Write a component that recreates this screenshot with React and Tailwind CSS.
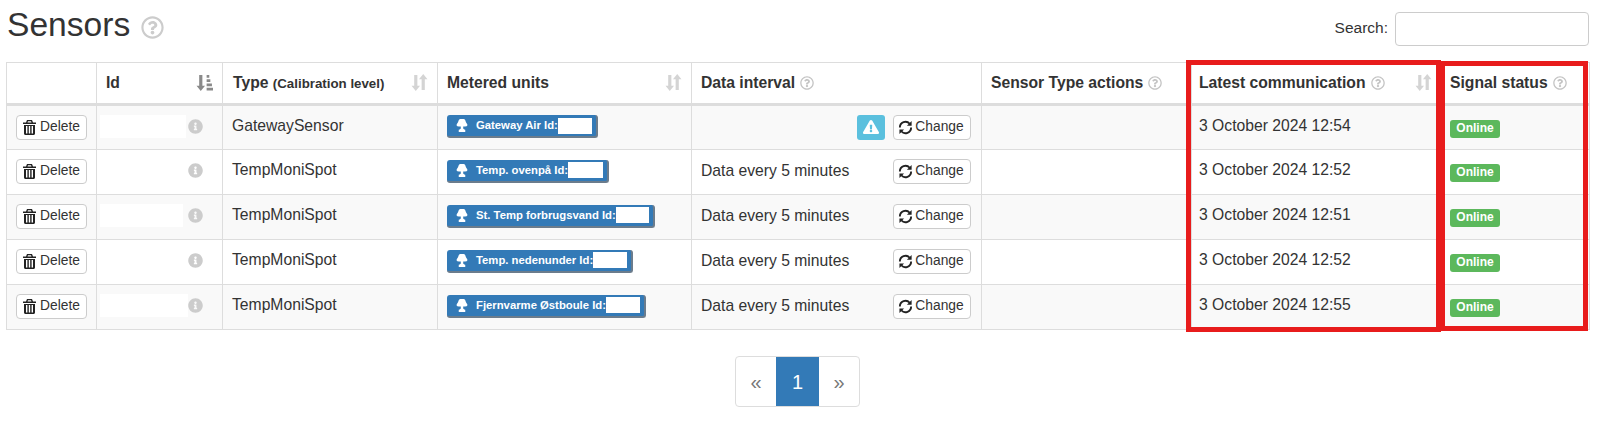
import { FaInfoCircle, FaRegQuestionCircle, FaExclamationTriangle } from 'react-icons/fa';

const rows = [
  { type: 'GatewaySensor', unit: 'Gateway Air Id:', unitClass: 'w-[151px]', boxClass: 'w-[37px]', idBox: 'w-[86px]', time: '3 October 2024 12:54', warn: true },
  { type: 'TempMoniSpot', unit: 'Temp. ovenpå Id:', unitClass: 'w-[162px]', boxClass: 'w-[40px]', idBox: 'w-[86px]', time: '3 October 2024 12:52' },
  { type: 'TempMoniSpot', unit: 'St. Temp forbrugsvand Id:', unitClass: 'w-[208px]', boxClass: 'w-[36px]', idBox: 'w-[83px]', time: '3 October 2024 12:51' },
  { type: 'TempMoniSpot', unit: 'Temp. nedenunder Id:', unitClass: 'w-[186px]', boxClass: 'w-[37px]', idBox: 'w-[86px]', time: '3 October 2024 12:52' },
  { type: 'TempMoniSpot', unit: 'Fjernvarme Østboule Id:', unitClass: 'w-[199px]', boxClass: 'w-[41px]', idBox: 'w-[88px]', time: '3 October 2024 12:55' },
];

function SortBoth() {
  return (
    <svg viewBox="0 0 16 16" className="h-[17px] w-[17px] text-[#d4d4d4]" fill="currentColor">
      <path d="M3 1h3v10h2.500L4.500 16 .5 11H3z" />
      <path d="M10 15h3V5h2.500L11.500 0l-4 5H10z" />
    </svg>
  );
}

function SortAsc() {
  return (
    <svg viewBox="0 0 16 16" className="h-[17px] w-[17px] text-[#8a8a8a]" fill="currentColor">
      <path d="M3 1h3v10h2.500L4.500 16 .5 11H3z" />
      <path d="M10 1h2.500v2.500H10zM10 5h3.500v2.500H10zM10 9h5v2.500h-5zM10 13h6v2.500h-6z" />
    </svg>
  );
}

function Lamp() {
  return (
    <svg viewBox="0 0 12 14" className="h-[13px] w-[12px] text-white" fill="currentColor">
      <path d="M3 .5C4 0 8 0 9 .5c.8.8 1 3 2.500 5 .6.9.4 2-.5 2.200-1 .2-2.500.3-3.700.3V10c0 .8.700 1.200 2.200 1.500V14h-7v-2.500C4 11.200 4.700 10.800 4.700 10V8C3.500 8 2 7.900 1 7.700.1 7.500-.1 6.400.5 5.500 2 3.500 2.200 1.300 3 .5z" />
    </svg>
  );
}

function Trash() {
  return (
    <svg viewBox="0 0 13 15" className="h-[15px] w-[13px] text-[#222]" fill="currentColor">
      <path d="M4 0h5l1 2.500h3V4H0V2.500h3zM5 1.200l-.500 1.300h4L8 1.200z" />
      <path d="M1 5h11v8.500c0 .8-.6 1.500-1.500 1.500h-8C1.700 15 1 14.300 1 13.500zM3 6v7.500h1.400V6zm2.800 0v7.500h1.400V6zm2.800 0v7.500H10V6z" />
    </svg>
  );
}

function Refresh() {
  return (
    <svg viewBox="0 0 16 16" className="h-[15px] w-[15px] text-[#222]" fill="none" stroke="currentColor" strokeWidth="2">
      <path d="M2 8a6 6 0 0 1 10.500-4" />
      <path d="M14 8a6 6 0 0 1-10.500 4" />
      <path d="M14.500 1v5h-5z" fill="currentColor" stroke="none" />
      <path d="M1.500 15v-5h5z" fill="currentColor" stroke="none" />
    </svg>
  );
}

function Th({ children, sort, help, className = '' }) {
  return (
    <th className={`h-[42px] border border-[#ddd] border-b-[3px] px-[9px] text-left align-middle text-[15.700px] font-bold text-[#333] ${className}`}>
      <div className="flex items-center justify-between">
        <span className="flex items-center gap-[5px] whitespace-nowrap">
          {children}
          {help && <FaRegQuestionCircle className="text-[14px] text-[#c4c4c4]" />}
        </span>
        {sort}
      </div>
    </th>
  );
}

function Btn({ children, className = '' }) {
  return (
    <button className={`flex h-[25px] items-center justify-center rounded-[4px] border border-[#ccc] bg-white text-[13.800px] text-[#333] ${className}`}>
      {children}
    </button>
  );
}

export default function App() {
  return (
    <div className="relative h-[432px] w-[1615px] overflow-hidden bg-white font-['Liberation_Sans',sans-serif] text-[15.700px] text-[#333]">
      <div className="flex h-[62px] items-start justify-between pl-[7px] pr-[26px]">
        <h1 className="mt-[3px] flex items-center gap-[11px] text-[33.600px] leading-[44px] font-normal">
          Sensors
          <FaRegQuestionCircle className="mt-[5px] text-[23px] text-[#ccc]" />
        </h1>
        <label className="mt-[12px] flex items-center gap-[7px] text-[15.500px]">
          <span className="pb-[2px]">Search:</span>
          <input className="h-[34px] w-[194px] rounded-[4px] border border-[#ccc] bg-white" />
        </label>
      </div>

      <div className="pl-[6px]">
        <table className="w-[1583px] table-fixed border-collapse">
          <colgroup>
            <col className="w-[90px]" />
            <col className="w-[126px]" />
            <col className="w-[215px]" />
            <col className="w-[254px]" />
            <col className="w-[290px]" />
            <col className="w-[210px]" />
            <col className="w-[252px]" />
            <col className="w-[146px]" />
          </colgroup>
          <thead>
            <tr>
              <Th />
              <Th sort={<SortAsc />}>Id</Th>
              <Th className="pl-[10px]" sort={<SortBoth />}>
                <span>Type <span className="text-[13.300px]">(Calibration level)</span></span>
              </Th>
              <Th sort={<SortBoth />}>Metered units</Th>
              <Th help>Data interval</Th>
              <Th help>Sensor Type actions</Th>
              <Th className="pl-[7px] pr-[11px]" help sort={<SortBoth />}>Latest communication</Th>
              <Th className="pl-[6px]" help>Signal status</Th>
            </tr>
          </thead>
          <tbody>
            {rows.map((row, i) => (
              <tr key={i} className={i % 2 === 0 ? 'bg-[#f9f9f9]' : 'bg-white'}>
                <td className="h-[45px] border border-[#ddd] pb-[1px] pl-[9px] align-middle">
                  <Btn className="w-[71px] gap-[4px]">
                    <Trash />
                    Delete
                  </Btn>
                </td>
                <td className="border border-[#ddd] pb-[3px] pl-[3px] align-middle">
                  <div className="flex items-center justify-between pr-[19px]">
                    <div className={`h-[23px] bg-white ${row.idBox}`} />
                    <FaInfoCircle className="text-[15px] text-[#ccc]" />
                  </div>
                </td>
                <td className="border border-[#ddd] px-[9px] pb-[4px] align-middle">{row.type}</td>
                <td className="border border-[#ddd] pb-[2px] pl-[9px] align-middle">
                  <div className={`flex h-[23px] items-center justify-between rounded-[3px] border-r-2 border-b-2 border-[#6b7c8c] bg-[#337ab7] pl-[9px] pr-[4px] text-[11.300px] font-bold text-white ${row.unitClass}`}>
                    <span className="flex items-center gap-[8px] whitespace-nowrap">
                      <Lamp />
                      {row.unit}
                    </span>
                    <span className={`h-[16px] bg-white ${row.boxClass}`} />
                  </div>
                </td>
                <td className="border border-[#ddd] pl-[9px] pr-[10px] pb-[1px] align-middle">
                  <div className="flex items-center justify-between">
                    <span className="pb-[2px]">{row.warn ? '' : 'Data every 5 minutes'}</span>
                    <div className="flex items-center gap-[8px]">
                      {row.warn && (
                        <span className="flex h-[25px] w-[28px] items-center justify-center rounded-[3px] bg-[#5bc0de]">
                          <FaExclamationTriangle className="text-[16px] text-white" />
                        </span>
                      )}
                      <Btn className="w-[78px] gap-[2px] pr-[2px]">
                        <Refresh />
                        Change
                      </Btn>
                    </div>
                  </div>
                </td>
                <td className="border border-[#ddd]" />
                <td className="border border-[#ddd] px-[7px] pb-[4px] align-middle whitespace-nowrap">{row.time}</td>
                <td className="border border-[#ddd] pl-[6px] pt-[2px] align-middle">
                  <span className="flex h-[18px] w-[50px] items-center justify-center rounded-[3px] bg-[#5cb85c] pb-[2px] text-[12px] font-bold text-white">
                    Online
                  </span>
                </td>
              </tr>
            ))}
          </tbody>
        </table>
      </div>

      <div className="mt-[26px] flex justify-center pr-[20px]">
        <div className="flex h-[51px] overflow-hidden rounded-[4px] border border-[#ddd] text-[20px]">
          <span className="flex w-[40px] items-center justify-center text-[#777]">«</span>
          <span className="flex w-[43px] items-center justify-center bg-[#337ab7] text-white">1</span>
          <span className="flex w-[40px] items-center justify-center text-[#777]">»</span>
        </div>
      </div>

      <div className="pointer-events-none absolute top-[60px] left-[1186px] h-[272px] w-[255px] border-[5px] border-[#e81c1c]" />
      <div className="pointer-events-none absolute top-[61px] left-[1440px] h-[270px] w-[148px] border-[5px] border-[#e81c1c]" />
    </div>
  );
}
